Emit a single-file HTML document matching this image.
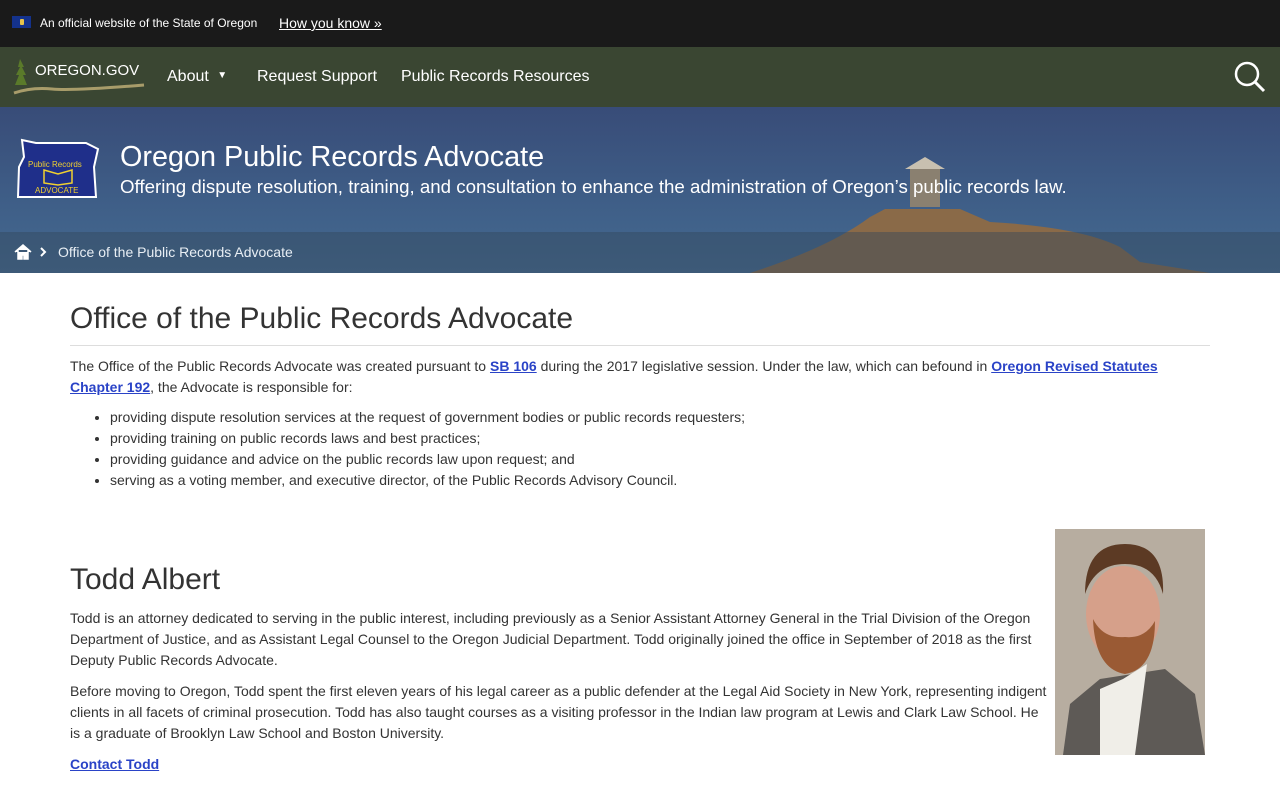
<!DOCTYPE html>
<html><head><meta charset="utf-8"><style>
*{margin:0;padding:0;box-sizing:border-box}
body{width:1280px;height:800px;overflow:hidden;font-family:"Liberation Sans",Arial,sans-serif;background:#fff;color:#333}
.top{height:47px;background:#1a1a1a;color:#fff;font-size:12px;position:relative}
.top .flag{position:absolute;left:12px;top:16px;width:19px;height:12px;background:#14328c}
.top .flag i{position:absolute;left:8px;top:3px;width:4px;height:6px;background:#e6c34a;border-radius:1px}
.top .t1{position:absolute;left:40px;top:16px}
.top .t2{position:absolute;left:279px;top:15px;font-size:14px;text-decoration:underline}
.nav{height:60px;background:#3a4632;position:relative;color:#fff;font-size:16px}
.nav span{position:absolute;top:21px}
.hero{height:166px;position:relative;background:linear-gradient(180deg,#384c78 0%,#3f5f88 60%,#456a90 100%);overflow:hidden}
.hero h1{position:absolute;left:120px;top:34px;font-size:28.8px;font-weight:normal;color:#fff}
.hero p{position:absolute;left:120px;top:69px;font-size:18.7px;color:#fff}
.bc{position:absolute;left:0;right:0;top:125px;height:41px;background:rgba(50,70,90,.45)}
.bc span{position:absolute;left:58px;top:12px;color:#e8eef4;font-size:14px}
.main{padding:0 70px}
h2{font-weight:normal;font-size:30px;color:#333}
p,li{font-size:14px;line-height:21px}
a{color:#2a43c7;font-weight:bold;text-decoration:underline}
ul{margin:9px 0 0 40px}
</style></head><body>
<div class="top"><div class="flag"><i></i></div><span class="t1">An official website of the State of Oregon</span><span class="t2">How you know »</span></div>
<div class="nav">
<svg style="position:absolute;left:12px;top:10px" width="135" height="40" viewBox="0 0 135 40"><path d="M8 2 L12 10 L10 10 L14 18 L11 18 L15 28 L3 28 L7 18 L4 18 L8 10 L6 10Z" fill="#5a7a2a"/><path d="M2 36 Q20 30 40 32 Q60 34 132 28" stroke="#a89c6a" stroke-width="3" fill="none"/><text x="23" y="18" fill="#fff" font-family="Liberation Sans" font-size="15">OREGON.GOV</text></svg>
<span style="left:167px">About <span style="position:relative;top:-3px;left:4px;font-size:10px">▼</span></span>
<span style="left:257px">Request Support</span>
<span style="left:401px">Public Records Resources</span>
<svg style="position:absolute;left:1233px;top:13px" width="34" height="34" viewBox="0 0 34 34"><circle cx="14" cy="14" r="11" stroke="#fff" stroke-width="2.5" fill="none"/><path d="M22 22 L31 31" stroke="#fff" stroke-width="3"/></svg>
</div>
<div class="hero">
<svg style="position:absolute;left:750px;top:40px" width="460" height="126" viewBox="0 0 460 126"><path d="M0 126 Q80 100 120 70 L135 62 L210 62 L240 75 Q330 80 370 100 L390 115 L460 126Z" fill="#8a6a48"/><rect x="160" y="20" width="30" height="40" fill="#8a8070"/><path d="M155 22 L175 10 L195 22Z" fill="#c8c0b0"/></svg>
<svg style="position:absolute;left:16px;top:30px" width="84" height="64" viewBox="0 0 84 64"><path d="M6 3 L20 6 L70 6 L82 12 L78 30 L80 60 L2 60 L3 30 L8 20Z" fill="#1f2f8a" stroke="#fff" stroke-width="2"/><text x="12" y="30" fill="#f0d030" font-size="8" font-family="Liberation Sans">Public Records</text><path d="M28 33 L42 37 L56 33 L56 46 L42 48 L28 46Z" fill="none" stroke="#f0d030" stroke-width="1.5"/><text x="19" y="56" fill="#f0d030" font-size="8" font-family="Liberation Sans">ADVOCATE</text></svg>
<h1>Oregon Public Records Advocate</h1>
<p>Offering dispute resolution, training, and consultation to enhance the administration of Oregon’s public records law.</p>
<div class="bc"><svg style="position:absolute;left:14px;top:12px" width="36" height="16" viewBox="0 0 36 16"><path d="M1 8 L9 1 L17 8 M4 6 V15 H8 V11 H10 V15 H14 V6" fill="#fff" stroke="#fff" stroke-width="1.5"/><path d="M27 4 L31 8 L27 12" stroke="#fff" stroke-width="2" fill="none"/></svg><span>Office of the Public Records Advocate</span></div>
</div>
<div class="main">
<h2 style="margin-top:29px;padding-bottom:9px;border-bottom:1px solid #ddd">Office of the Public Records Advocate</h2>
<p style="margin-top:10px">The Office of the Public Records Advocate was created pursuant to <a>SB 106</a> during the 2017 legislative session. Under the law, which can befound in <a>Oregon Revised Statutes Chapter 192</a>, the Advocate is responsible for:</p>
<ul><li>providing dispute resolution services at the request of government bodies or public records requesters;</li><li>providing training on public records laws and best practices;</li><li>providing guidance and advice on the public records law upon request; and</li><li>serving as a voting member, and executive director, of the Public Records Advisory Council.</li></ul>
<svg style="position:absolute;left:1055px;top:529px" width="150" height="226" viewBox="0 0 150 226"><rect width="150" height="226" fill="#b7ada0"/><path d="M8 226 L15 175 L45 150 L110 140 L140 165 L150 226Z" fill="#5e5a56"/><path d="M45 226 L45 160 L68 150 L92 135 L80 226Z" fill="#f0eee8"/><ellipse cx="68" cy="85" rx="37" ry="48" fill="#d6a08a"/><path d="M38 90 Q40 140 70 145 Q100 140 100 92 Q90 110 70 108 Q48 110 38 90Z" fill="#9a5a34"/><path d="M30 65 Q30 15 70 15 Q110 15 108 65 Q100 35 70 35 Q40 35 30 65Z" fill="#5c3a24"/></svg>
<h2 style="margin-top:72px">Todd Albert</h2>
<p style="margin-top:11px;width:980px">Todd is an attorney dedicated to serving in the public interest, including previously as a Senior Assistant Attorney General in the Trial Division of the Oregon Department of Justice, and as Assistant Legal Counsel to the Oregon Judicial Department. Todd originally joined the office in September of 2018 as the first Deputy Public Records Advocate.</p>
<p style="margin-top:10px;width:980px">Before moving to Oregon, Todd spent the first eleven years of his legal career as a public defender at the Legal Aid Society in New York, representing indigent clients in all facets of criminal prosecution. Todd has also taught courses as a visiting professor in the Indian law program at Lewis and Clark Law School. He is a graduate of Brooklyn Law School and Boston University.</p>
<p style="margin-top:10px"><a>Contact Todd</a></p>
</div>
</body></html>
